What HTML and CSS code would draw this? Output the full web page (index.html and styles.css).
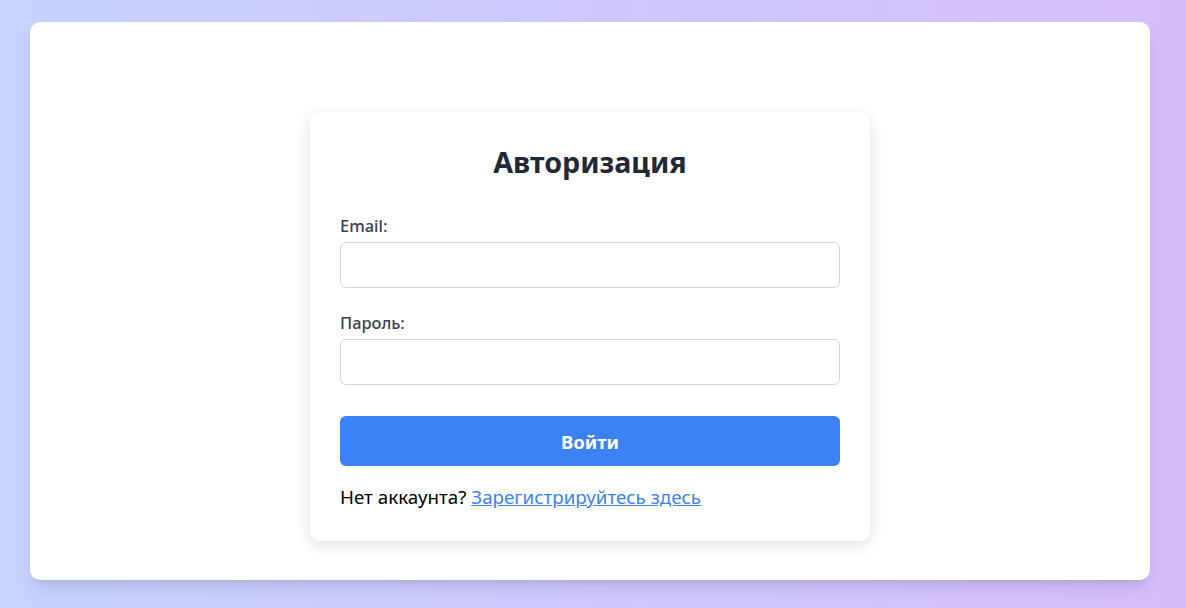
FILE: index.html
```html
<!DOCTYPE html>
<html lang="ru">
<head>
<meta charset="utf-8">
<title>Авторизация</title>
<link rel="stylesheet" href="styles.css">
</head>
<body>
<div class="page">
  <main class="panel">
    <form class="card" onsubmit="return false">
      <h2 class="title">Авторизация</h2>
      <div class="field">
        <label class="label" for="email">Email:</label>
        <input class="input" id="email" type="email">
      </div>
      <div class="field">
        <label class="label" for="password">Пароль:</label>
        <input class="input" id="password" type="password">
      </div>
      <button class="btn" type="submit">Войти</button>
      <p class="note">Нет аккаунта? <a class="link" href="#">Зарегистрируйтесь здесь</a></p>
    </form>
  </main>
</div>
</body>
</html>
```

FILE: styles.css
```css
* { box-sizing: border-box; }
html, body { margin: 0; height: 100%; }
body {
  font-family: "Noto Sans", "Open Sans", sans-serif;
  background: linear-gradient(90deg, #c7d2fe 0%, #d5bdfd 100%);
}
.page {
  padding: 22px 36px 28px 30px;
  height: 100%;
}
.panel {
  width: 1120px;
  height: 558px;
  background: #fff;
  border-radius: 10px;
  box-shadow: 0 10px 15px -3px rgba(0,0,0,0.1), 0 4px 6px -4px rgba(0,0,0,0.1);
  display: flex;
  justify-content: center;
  padding-top: 90px;
}
.card {
  width: 560px;
  height: 429px;
  background: #fff;
  border-radius: 10px;
  box-shadow: 0 4px 16px rgba(0,0,0,0.12);
  padding: 30px;
  display: flex;
  flex-direction: column;
}
.title {
  margin: 0 0 32px;
  text-align: center;
  font-size: 28.7px;
  line-height: 40px;
  font-weight: 700;
  color: #1f2937;
}
.field {
  display: flex;
  flex-direction: column;
  gap: 4px;
  margin-bottom: 23px;
}
.field + .field { margin-bottom: 31px; }
.label {
  font-size: 16.4px;
  line-height: 24px;
  font-weight: 500;
  color: #374151;
}
.input {
  height: 46px;
  width: 100%;
  border: 1px solid #d1d5db;
  border-radius: 6px;
  padding: 0 12px;
  font: inherit;
  background: #fff;
}
.btn {
  height: 50px;
  border: 0;
  border-radius: 6px;
  background: #3b82f6;
  color: #fff;
  font: inherit;
  font-size: 18.5px;
  font-weight: 700;
  margin-bottom: 19px;
}
.note {
  margin: 0;
  font-size: 18.8px;
  line-height: 24px;
  color: #000;
}
.link { color: #3b82f6; }
```
